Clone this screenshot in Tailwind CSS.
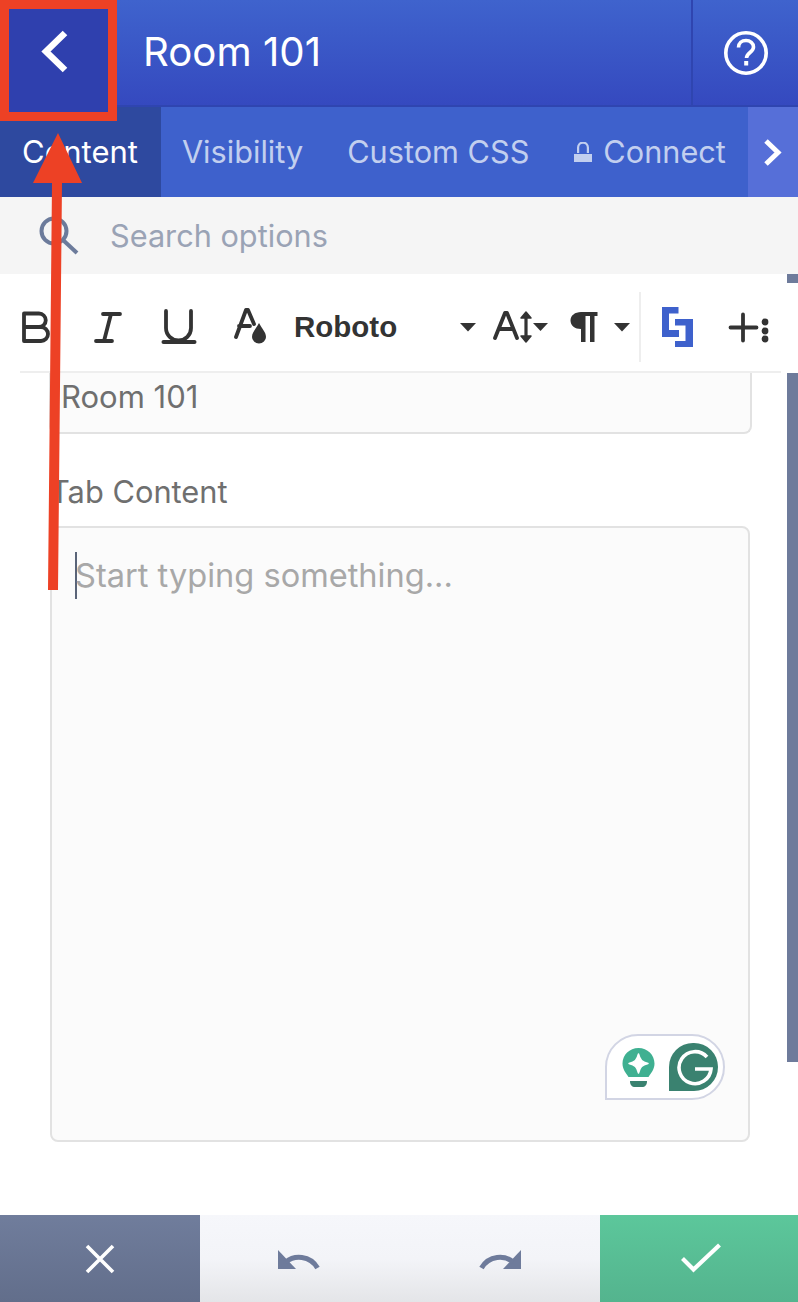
<!DOCTYPE html>
<html>
<head>
<meta charset="utf-8">
<script src="https://cdn.jsdelivr.net/npm/@tailwindcss/browser@4"></script>
</head>
<body class="bg-white">
<div class="relative w-[798px] h-[1302px] overflow-hidden flex flex-col bg-white font-['Inter',sans-serif]">
  <!-- header -->
  <header class="h-[107px] shrink-0 flex border-b-2 border-[#2f45b0] bg-gradient-to-b from-[#3f63cd] to-[#3549bf] text-white">
    <h1 class="ml-[143px] flex-1 text-[40.200px] leading-[104px] font-normal">Room 101</h1>
    <div class="w-[107px] flex items-center justify-center border-l-2 border-[#2f45b0]">
      <svg width="46" height="46" viewBox="723 29 46 46" fill="none" stroke="white">
        <circle cx="746" cy="52" r="20.2" stroke-width="3.6"/>
        <path d="M738.5 46.5c0-4.200 3.300-7 7.500-7s7.500 2.800 7.500 6.500c0 5.500-7 5.500-7 11" stroke-width="3.600"/>
        <rect x="744.200" y="60" width="4" height="4.500" fill="white" stroke="none"/>
      </svg>
    </div>
  </header>
  <!-- tabs -->
  <nav class="h-[90px] shrink-0 flex items-center bg-[#3e61cc] text-[30.700px] text-[#c2cfef]">
    <span class="h-full flex items-center pl-[22px] pr-[23px] bg-[#2e499f] text-white text-[31px]">Content</span>
    <span class="ml-[21px]">Visibility</span>
    <span class="ml-[44px]">Custom CSS</span>
    <svg class="ml-[45px]" width="18" height="20" viewBox="575 142 18 20" fill="#c2cfef">
      <path d="M578 153v-5.500a6 6 0 0 1 12 0V153h-2.200v-5.500a3.800 3.800 0 0 0-7.600 0V153z"/>
      <rect x="575" y="154" width="18" height="8"/>
    </svg>
    <span class="ml-[11px]">Connect</span>
    <div class="ml-auto w-[50px] h-full bg-[#566fd8] flex items-center justify-center">
      <svg width="24" height="30" viewBox="763 137 24 30" fill="none" stroke="white" stroke-width="5">
        <path d="M768 141l12 11.500-12 11.500"/>
      </svg>
    </div>
  </nav>
  <!-- search -->
  <div class="h-[77px] shrink-0 flex items-center bg-[#f5f5f5] pl-[38px]">
    <svg width="42" height="42" viewBox="38 215 42 42" fill="none" stroke="#6c7b9b" stroke-width="4">
      <circle cx="54" cy="231" r="12.500"/>
      <path d="M63 240l14 13"/>
    </svg>
    <span class="ml-[30px] pt-[2px] text-[30.700px] text-[#9aa3b5]">Search options</span>
  </div>
  <!-- main -->
  <main class="relative flex-1 flex flex-col bg-white">
    <div class="absolute top-0 right-0 w-[11px] h-[788px] bg-[#6e7b9b]"></div>
    <!-- toolbar -->
    <div class="relative z-10 mt-[9px] h-[90px] shrink-0 bg-white">
      <div class="flex items-start pt-[17px] h-[88px]">
        <svg class="ml-[20px]" width="30" height="50" viewBox="20 300 30 50" fill="none" stroke="#333" stroke-width="3.800" stroke-linejoin="round">
          <path d="M24 313.500h15a6.500 6.500 0 0 1 0 13.500H24zM24 327h17a7 7 0 0 1 0 14H24z"/>
        </svg>
        <svg class="ml-[40px]" width="35" height="50" viewBox="90 300 35 50" fill="none" stroke="#333" stroke-width="3.800" stroke-linecap="round">
          <path d="M103 314h17M96 341h16M111 314l-7 27"/>
        </svg>
        <svg class="ml-[33px]" width="42" height="50" viewBox="158 300 42 50" fill="none" stroke="#333" stroke-width="3.800" stroke-linecap="round">
          <path d="M166 311v17a12.500 12.500 0 0 0 25 0v-17"/>
          <path d="M163.500 342h31" stroke-width="4"/>
        </svg>
        <svg class="ml-[30px]" width="40" height="50" viewBox="230 300 40 50" fill="none" stroke="#333" stroke-width="3.800" stroke-linecap="round" stroke-linejoin="round">
          <path d="M236 337l10-27h2l6 14M239 326h11"/>
          <path d="M259 323c3 6 7 9 7 14a7 6.500 0 0 1-14 0c0-5 4-8 7-14z" fill="#333" stroke="none"/>
        </svg>
        <span class="ml-[24px] w-[166px] h-[50px] leading-[54px] text-[#333] text-[29.500px] font-bold font-['Liberation_Sans',sans-serif]">Roboto</span>
        <svg width="18" height="50" viewBox="460 300 18 50" fill="#333"><path d="M460 323h16l-8 8.500z"/></svg>
        <svg class="ml-[12px]" width="60" height="50" viewBox="490 300 60 50" fill="none" stroke="#333" stroke-width="3.800" stroke-linecap="round" stroke-linejoin="round">
          <path d="M495 338l10-25h2l10 25M499 329h14"/>
          <path d="M526 314v26" stroke-width="3.200"/>
          <path d="M521 318l5-6 5 6zM521 336l5 6 5-6z" fill="#333" stroke-width="1.500"/>
          <path d="M533 323h15l-7.500 8z" fill="#333" stroke="none"/>
        </svg>
        <svg class="ml-[16px]" width="34" height="50" viewBox="566 300 34 50" fill="#333">
          <path d="M581 312h16.500v4h-3v26h-4.500v-26h-4.500v26H581v-13c-6 0-10.500-3.500-10.500-8.500s4.500-8.500 10.500-8.500z"/>
        </svg>
        <svg class="ml-[12px]" width="20" height="50" viewBox="612 300 20 50" fill="#333"><path d="M614 323h16l-8 8.500z"/></svg>
        <div class="ml-[7px] w-[2px] h-[70px] -mt-[8px] bg-[#eeeeee]"></div>
        <svg class="ml-[19px]" width="35" height="50" viewBox="660 300 35 50" fill="#3e61cc">
          <path d="M662 307h16.500v6.500h-9.500V330h10v7h-17z"/>
          <path d="M675 319h18v28h-18v-6h10.500v-15.500H675z"/>
        </svg>
        <svg class="ml-[30px]" width="45" height="50" viewBox="725 300 45 50" fill="#333">
          <path d="M743 314.500v26M730.500 327.500h26" fill="none" stroke="#333" stroke-width="3.800" stroke-linecap="round"/>
          <circle cx="765" cy="322" r="3.400"/><circle cx="765" cy="331" r="3.400"/><circle cx="765" cy="339" r="3.400"/>
        </svg>
      </div>
      <div class="ml-[20px] w-[761px] h-[2px] bg-[#eeeeee]"></div>
    </div>
    <!-- form -->
    <div class="flex flex-col">
      <div class="ml-[49px] w-[703px] h-[62px] -mt-[1px] pl-[10px] pb-[10px] flex items-center bg-[#fbfbfb] border-2 border-t-0 border-[#e2e2e2] rounded-b-[8px] text-[31px] text-[#6f6f6f]">Room 101</div>
      <label class="ml-[50px] mt-[41px] h-[34px] leading-[34px] text-[30.800px] text-[#6f6f6f]">Tab Content</label>
      <div class="relative ml-[50px] mt-[17px] w-[700px] h-[616px] bg-[#fbfbfb] border-2 border-[#e2e2e2] rounded-[8px]">
        <div class="absolute left-[23px] top-[24px] w-[2px] h-[47px] bg-[#5a6478]"></div>
        <div class="absolute left-[23px] top-[25px] text-[32.600px] leading-[44px] text-[#a8a8a8]">Start typing something...</div>
        <div class="absolute left-[553px] top-[506px] w-[120px] h-[66px] flex items-center bg-white border-2 border-[#d2d5e4] rounded-[33px] rounded-bl-none">
          <svg class="ml-[14px]" width="34" height="44" viewBox="620 1043 34 44">
            <path d="M637.500 1046c9 0 16 7 16 15.500 0 5.500-3 9-6 13.500h-20c-3-4.500-6-8-6-13.500 0-8.500 7-15.500 16-15.500z" fill="#3fb091"/>
            <path d="M637.500 1052c1.500 6 3.500 8 9.500 9.500-6 1.500-8 3.500-9.500 9.500-1.500-6-3.500-8-9.500-9.500 6-1.500 8-3.500 9.500-9.500z" fill="white" stroke="white" stroke-width="1.500" stroke-linejoin="round"/>
            <path d="M629 1079h17c0 4-2 6-5 6h-7c-3 0-5-2-5-6z" fill="#3a8270"/>
          </svg>
          <div class="ml-[14px] w-[49px] h-[48px] flex items-center justify-center bg-[#3a8270] rounded-[24px] rounded-bl-none">
            <svg width="38" height="38" viewBox="0 0 38 38" fill="none" stroke="white" stroke-width="3.600">
              <path d="M32 9a16 16 0 1 0 4 12H20"/>
            </svg>
          </div>
        </div>
      </div>
    </div>
  </main>
  <!-- footer -->
  <footer class="h-[87px] shrink-0 grid grid-cols-[200px_200px_200px_198px]">
    <div class="flex items-center justify-center bg-gradient-to-b from-[#707d9c] to-[#626e8b]">
      <svg width="34" height="34" viewBox="0 0 34 34" fill="none" stroke="white" stroke-width="3.600"><path d="M4 4l26 26M30 4L4 30"/></svg>
    </div>
    <div class="flex items-center justify-center bg-gradient-to-b from-[#f6f7fb] via-[#f3f4f8] to-[#e4e5e8]">
      <svg class="mt-[3px] mr-[2px]" width="44" height="22" viewBox="277 1249 44 22">
        <path d="M278 1250v19h18z" fill="#6e7b9b"/>
        <path d="M286 1262c8-7 24-7 31.500 6" fill="none" stroke="#6e7b9b" stroke-width="5"/>
      </svg>
    </div>
    <div class="flex items-center justify-center bg-gradient-to-b from-[#f6f7fb] via-[#f3f4f8] to-[#e4e5e8]">
      <svg class="mt-[3px]" width="44" height="22" viewBox="277 1249 44 22" style="transform:scaleX(-1)">
        <path d="M278 1250v19h18z" fill="#6e7b9b"/>
        <path d="M286 1262c8-7 24-7 31.500 6" fill="none" stroke="#6e7b9b" stroke-width="5"/>
      </svg>
    </div>
    <div class="flex items-center justify-center bg-gradient-to-b from-[#5cc79b] to-[#54b48e]">
      <svg class="ml-[4px]" width="42" height="32" viewBox="680 1245 42 32" fill="none" stroke="white" stroke-width="4.200"><path d="M682.500 1260.500l11 11 26-24.500"/></svg>
    </div>
  </footer>
  <!-- annotation: red box around the back button -->
  <button class="absolute z-20 top-0 left-0 w-[117px] h-[121px] border-[9px] border-[#ed4125] bg-[#2f40ae] flex items-center justify-center">
    <svg width="32" height="50" viewBox="37 27 32 50" fill="none" stroke="white" stroke-width="6.500" class="mb-[18px] mr-[10px]">
      <path d="M64 33L45 51.500 64 70"/>
    </svg>
  </button>
  <!-- annotation: red arrow -->
  <svg class="absolute z-20 top-0 left-0 pointer-events-none" width="798" height="1302" viewBox="0 0 798 1302" fill="#ed4125">
    <path d="M58 133L82 183H62L58 590H48L52 183H33z"/>
  </svg>
</div>
</body>
</html>
